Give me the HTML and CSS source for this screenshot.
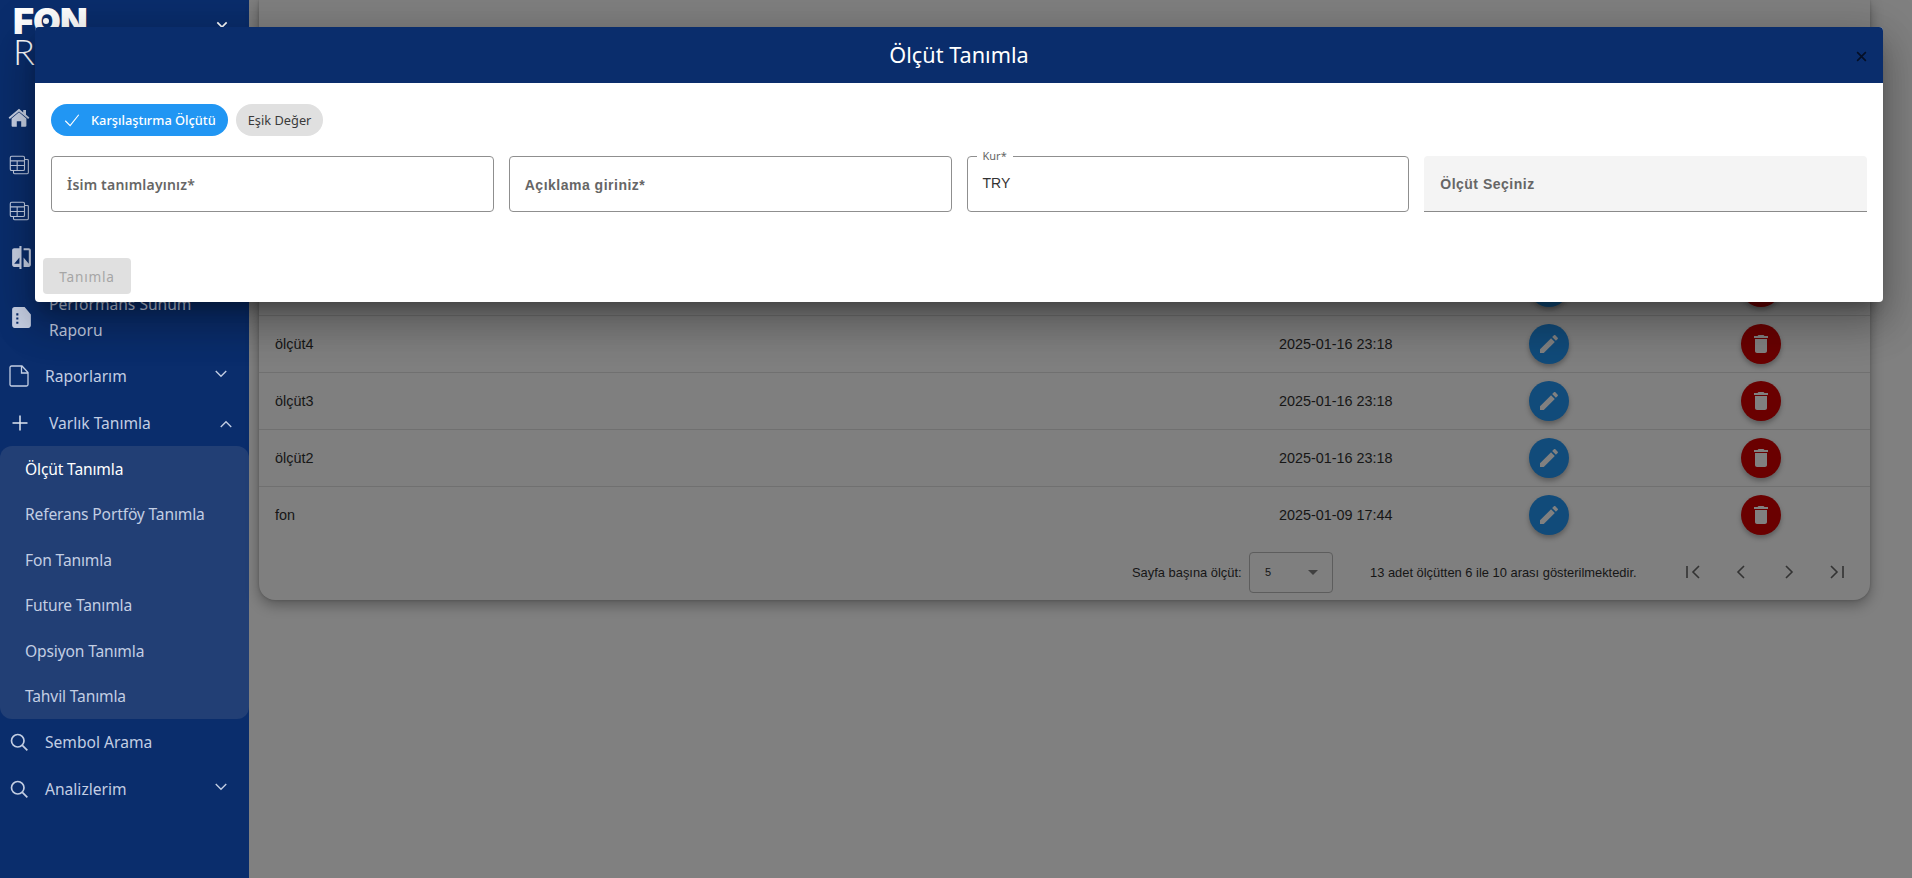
FILE: index.html
```html
<!DOCTYPE html>
<html lang="tr">
<head>
<meta charset="utf-8">
<title>Ölçüt Tanımla</title>
<link rel="stylesheet" href="styles.css">
</head>
<body>
<div class="app">
  <aside class="sidebar">
    <div class="logo">
      <div class="logo-fon">F<span class="logo-o">O</span>N</div>
      <div class="logo-r">R</div>
      <svg class="logo-chev" viewBox="0 0 24 24"><path d="M5 8l7 7 7-7"/></svg>
    </div>
    <nav class="nav">
      <div class="nav-row">
        <svg class="ic ic-fill ic-home" viewBox="0 0 24 24"><path d="M12 6.200L4.600 12.600v7.200c0 .5.4.9.9.9h4.300v-5.400h4.400v5.400h4.300c.5 0 .9-.4.9-.9v-7.200z"/><path d="M1.600 11.600L12 2.800l4.200 3.600V4h2.800v4.800l3.400 2.800-1.200 1.500L12 5.400 2.800 13.100z"/></svg>
      </div>
      <div class="nav-row">
        <svg class="ic ic-line ic-table" viewBox="0 0 24 24"><rect x="2.500" y="2.500" width="15.500" height="15.500" rx="1.500"/><path d="M2.500 7.500H18M2.500 12.500H18M10 7.500V18M6 18v2.500c0 .8.7 1 1.200 1H21c.8 0 1.200-.5 1.200-1.200V7c0-.6-.4-1-1-1H18"/></svg>
      </div>
      <div class="nav-row">
        <svg class="ic ic-line ic-table" viewBox="0 0 24 24"><rect x="2.500" y="2.500" width="15.500" height="15.500" rx="1.500"/><path d="M2.500 7.500H18M2.500 12.500H18M10 7.500V18M6 18v2.500c0 .8.7 1 1.200 1H21c.8 0 1.200-.5 1.200-1.200V7c0-.6-.4-1-1-1H18"/></svg>
      </div>
      <div class="nav-row">
        <svg class="ic ic-fill ic-big" viewBox="0 0 24 24"><path d="M10 3H5c-1.100 0-2 .9-2 2v14c0 1.100.9 2 2 2h5v2h2V1h-2v2zm0 15H5l5-6v6zm9-15h-5v2h5v13l-5-6v9h5c1.100 0 2-.9 2-2V5c0-1.100-.9-2-2-2z"/></svg>
      </div>
      <div class="nav-row nav-row-tall">
        <svg class="ic ic-fill ic-big" viewBox="0 0 24 24"><path d="M3 4.500C3 3.100 4 2 5.400 2H15l6 7v10.500c0 1.400-1 2.500-2.400 2.500H5.400C4 22 3 20.900 3 19.500zM7 8v2h2V8zm0 4v2h2v-2zm0 4v2h2v-2z"/></svg>
        <span class="nav-text nav-text-alt">Performans Sunum Raporu</span>
      </div>
      <div class="nav-row">
        <svg class="ic ic-line ic-doc" viewBox="0 0 24 24"><path d="M3 3.500C3 2.700 3.700 2 4.500 2H15l6 6.500V20.500c0 .8-.7 1.500-1.500 1.500h-15C3.700 22 3 21.300 3 20.500zM14.500 2v7H21"/></svg>
        <span class="nav-text">Raporlarım</span>
        <svg class="chev" viewBox="0 0 24 24"><path d="M5 8l7 7 7-7"/></svg>
      </div>
      <div class="nav-row nav-row-open">
        <svg class="ic ic-plus" viewBox="0 0 24 24"><path d="M12 3v18M3 12h18"/></svg>
        <span class="nav-text nav-text-plus">Varlık Tanımla</span>
        <svg class="chev chev-up" viewBox="0 0 24 24"><path d="M5 16l7-7 7 7"/></svg>
      </div>
      <div class="submenu">
        <a class="sub-item active">Ölçüt Tanımla</a>
        <a class="sub-item">Referans Portföy Tanımla</a>
        <a class="sub-item">Fon Tanımla</a>
        <a class="sub-item">Future Tanımla</a>
        <a class="sub-item">Opsiyon Tanımla</a>
        <a class="sub-item">Tahvil Tanımla</a>
      </div>
      <div class="nav-row">
        <svg class="ic ic-line ic-search" viewBox="0 0 24 24"><circle cx="10.500" cy="10.500" r="7.500"/><path d="M16 16l6 6"/></svg>
        <span class="nav-text">Sembol Arama</span>
      </div>
      <div class="nav-row nav-row-open">
        <svg class="ic ic-line ic-search" viewBox="0 0 24 24"><circle cx="10.500" cy="10.500" r="7.500"/><path d="M16 16l6 6"/></svg>
        <span class="nav-text">Analizlerim</span>
        <svg class="chev" viewBox="0 0 24 24"><path d="M5 8l7 7 7-7"/></svg>
      </div>
    </nav>
  </aside>

  <main class="main">
    <section class="card">
      <div class="row">
        <span>ölçüt5</span><span>2025-01-16 23:18</span>
        <span class="cell-btn"><button class="fab fab-edit"><svg viewBox="0 0 24 24"><path d="M3 17.250V21h3.750L17.810 9.940l-3.750-3.750L3 17.250zM20.710 7.040c.39-.39.39-1.020 0-1.410l-2.340-2.340c-.39-.39-1.020-.39-1.410 0l-1.830 1.830 3.750 3.750 1.830-1.830z"/></svg></button></span>
        <span class="cell-btn"><button class="fab fab-del"><svg viewBox="0 0 24 24"><path d="M6 19c0 1.100.9 2 2 2h8c1.100 0 2-.9 2-2V7H6v12zM19 4h-3.500l-1-1h-5l-1 1H5v2h14V4z"/></svg></button></span>
      </div>
      <div class="row">
        <span>ölçüt4</span><span>2025-01-16 23:18</span>
        <span class="cell-btn"><button class="fab fab-edit"><svg viewBox="0 0 24 24"><path d="M3 17.250V21h3.750L17.810 9.940l-3.750-3.750L3 17.250zM20.710 7.040c.39-.39.39-1.020 0-1.410l-2.340-2.340c-.39-.39-1.020-.39-1.410 0l-1.830 1.830 3.750 3.750 1.830-1.830z"/></svg></button></span>
        <span class="cell-btn"><button class="fab fab-del"><svg viewBox="0 0 24 24"><path d="M6 19c0 1.100.9 2 2 2h8c1.100 0 2-.9 2-2V7H6v12zM19 4h-3.500l-1-1h-5l-1 1H5v2h14V4z"/></svg></button></span>
      </div>
      <div class="row">
        <span>ölçüt3</span><span>2025-01-16 23:18</span>
        <span class="cell-btn"><button class="fab fab-edit"><svg viewBox="0 0 24 24"><path d="M3 17.250V21h3.750L17.810 9.940l-3.750-3.750L3 17.250zM20.710 7.040c.39-.39.39-1.020 0-1.410l-2.340-2.340c-.39-.39-1.020-.39-1.410 0l-1.830 1.830 3.750 3.750 1.830-1.830z"/></svg></button></span>
        <span class="cell-btn"><button class="fab fab-del"><svg viewBox="0 0 24 24"><path d="M6 19c0 1.100.9 2 2 2h8c1.100 0 2-.9 2-2V7H6v12zM19 4h-3.500l-1-1h-5l-1 1H5v2h14V4z"/></svg></button></span>
      </div>
      <div class="row">
        <span>ölçüt2</span><span>2025-01-16 23:18</span>
        <span class="cell-btn"><button class="fab fab-edit"><svg viewBox="0 0 24 24"><path d="M3 17.250V21h3.750L17.810 9.940l-3.750-3.750L3 17.250zM20.710 7.040c.39-.39.39-1.020 0-1.410l-2.340-2.340c-.39-.39-1.020-.39-1.410 0l-1.830 1.830 3.750 3.750 1.830-1.830z"/></svg></button></span>
        <span class="cell-btn"><button class="fab fab-del"><svg viewBox="0 0 24 24"><path d="M6 19c0 1.100.9 2 2 2h8c1.100 0 2-.9 2-2V7H6v12zM19 4h-3.500l-1-1h-5l-1 1H5v2h14V4z"/></svg></button></span>
      </div>
      <div class="row row-last">
        <span>fon</span><span>2025-01-09 17:44</span>
        <span class="cell-btn"><button class="fab fab-edit"><svg viewBox="0 0 24 24"><path d="M3 17.250V21h3.750L17.810 9.940l-3.750-3.750L3 17.250zM20.710 7.040c.39-.39.39-1.020 0-1.410l-2.340-2.340c-.39-.39-1.020-.39-1.410 0l-1.830 1.830 3.750 3.750 1.830-1.830z"/></svg></button></span>
        <span class="cell-btn"><button class="fab fab-del"><svg viewBox="0 0 24 24"><path d="M6 19c0 1.100.9 2 2 2h8c1.100 0 2-.9 2-2V7H6v12zM19 4h-3.500l-1-1h-5l-1 1H5v2h14V4z"/></svg></button></span>
      </div>
      <div class="pager">
        <span class="pager-label">Sayfa başına ölçüt:</span>
        <div class="pager-select"><span>5</span><i class="caret"></i></div>
        <span class="pager-info">13 adet ölçütten 6 ile 10 arası gösterilmektedir.</span>
        <div class="pager-nav">
          <svg viewBox="0 0 24 24"><path d="M6 6v12M18 6l-6 6 6 6"/></svg>
          <svg viewBox="0 0 24 24"><path d="M15 6l-6 6 6 6"/></svg>
          <svg viewBox="0 0 24 24"><path d="M9 6l6 6-6 6"/></svg>
          <svg viewBox="0 0 24 24"><path d="M18 6v12M6 6l6 6-6 6"/></svg>
        </div>
      </div>
    </section>
  </main>

  <div class="modal">
    <header class="modal-head">
      <h2 class="modal-title">Ölçüt Tanımla</h2>
      <svg class="modal-close" viewBox="0 0 24 24"><path d="M4 4l16 16M20 4L4 20"/></svg>
    </header>
    <div class="modal-body">
      <div class="chips">
        <span class="chip chip-on"><svg viewBox="0 0 24 24"><path d="M3 13l6.500 6.500L21 5"/></svg>Karşılaştırma Ölçütü</span>
        <span class="chip">Eşik Değer</span>
      </div>
      <div class="fields">
        <div class="field"><span class="field-label">İsim tanımlayınız*</span></div>
        <div class="field"><span class="field-label field-label-arial">Açıklama giriniz*</span></div>
        <div class="field"><span class="field-float">Kur*</span><span class="field-value">TRY</span></div>
        <div class="field field-filled"><span class="field-label field-label-arial">Ölçüt Seçiniz</span></div>
      </div>
    </div>
    <div class="modal-actions"><button class="btn-submit" disabled>Tanımla</button></div>
  </div>
</div>
</body>
</html>
```

FILE: styles.css
```css
* { box-sizing: border-box; }
html, body { margin: 0; height: 878px; overflow: hidden; }
body { font-family: "Noto Sans", "Liberation Sans", sans-serif; background: #808080; }

.app { position: relative; display: flex; height: 878px; }

/* Sidebar */
.sidebar { width: 249px; flex: none; height: 878px; background: #0a2d6c; color: #c3cee3; }
.logo { position: relative; height: 95px; padding: 5px 0 0 13px; color: #fff; }
.logo-fon { font-family: "Inter", "Liberation Sans", sans-serif; font-weight: 900; font-size: 36px; line-height: 32px; letter-spacing: -1px; margin-bottom: 0; }
.logo-o { position: relative; }
.logo-o::after { content: ""; position: absolute; left: 50%; top: 50%; width: 6px; height: 6px; margin: -3px 0 0 -3px; border-radius: 50%; background: #fff; }
.logo-r { font-family: "Lato", sans-serif; font-weight: 300; font-size: 36px; line-height: 28px; }
.logo-chev { position: absolute; left: 214px; top: 17px; width: 16px; height: 16px; fill: none; stroke: #fff; stroke-width: 2.500; }

.nav { display: flex; flex-direction: column; }
.nav-row { display: flex; align-items: center; height: 46px; padding-left: 9px; position: relative; }
.nav-row-tall { height: 74px; }
.nav-row-open { margin-top: 1px; }
.nav-text { font-size: 15.600px; line-height: 26px; margin-left: 16px; }
.nav-text-alt { margin-left: 15px; width: 180px; margin-top: 2px; }
.nav-text-plus { margin-left: 19px; }
.ic { width: 20px; height: 20px; flex: none; }
.ic-fill { fill: #c9d2e6; }
.ic-home { width: 24px; height: 24px; margin-left: -2px; margin-right: -2px; }
.ic-big { width: 25px; height: 25px; margin-top: 2px; }
.ic-line { fill: none; stroke: #c3cee3; stroke-width: 1.400; }
.ic-table { width: 22px; height: 22px; margin-left: -1px; margin-top: 1px; stroke-width: 1.200; }
.ic-doc { width: 24px; height: 24px; margin-left: -2px; margin-right: -2px; stroke-width: 1.300; }
.ic-plus { fill: none; stroke: #dfe5f0; stroke-width: 1.800; margin-left: 1px; }
.ic-search { stroke-width: 2; }
.chev { position: absolute; left: 212px; top: 12px; width: 18px; height: 18px; fill: none; stroke: #c3cee3; stroke-width: 1.800; }
.chev-up { left: 217px; top: 15px; }

.submenu { background: #223f75; border-radius: 12px; display: flex; flex-direction: column; height: 273px; }
.sub-item { display: flex; align-items: center; height: 45.500px; padding-left: 25px; font-size: 15.600px; letter-spacing: -.15px; color: #c3cee3; }
.sub-item.active { color: #fff; }

/* Main table card (dimmed by the open dialog) */
.main { flex: 1; min-width: 0; padding-left: 10px; padding-right: 42px; }
.card { height: 600px; display: flex; flex-direction: column; justify-content: flex-end; background: #7f7f7f; border-radius: 0 0 16px 16px; box-shadow: 0 5px 14px rgba(0,0,0,.32), 0 0 3px rgba(0,0,0,.2); font-family: "Liberation Sans", sans-serif; color: #161616; }
.row { display: grid; grid-template-columns: 1004px 161px 218px 206px; align-items: center; height: 57px; flex: none; padding-left: 16px; font-size: 14.400px; border-bottom: 1px solid #707070; }
.row-last { border-bottom-color: transparent; }
.cell-btn { display: flex; justify-content: center; }
.fab { width: 40px; height: 40px; padding: 8px; border: 0; border-radius: 50%; display: block; box-shadow: 0 3px 5px rgba(0,0,0,.28); }
.fab svg { display: block; width: 24px; height: 24px; fill: #808080; }
.fab-edit { background: #114b7a; }
.fab-del { background: #6a0000; }

.pager { display: flex; align-items: center; height: 56px; flex: none; padding-left: 873px; font-size: 12.900px; }
.pager-label { width: 117px; white-space: nowrap; }
.pager-select { width: 84px; height: 41px; border: 1px solid #5d5d5d; border-radius: 4px; display: flex; align-items: center; justify-content: space-between; padding: 0 14px 0 15px; font-size: 11px; }
.caret { width: 0; height: 0; border-left: 5px solid transparent; border-right: 5px solid transparent; border-top: 5px solid #404040; }
.pager-info { margin-left: 37px; width: 311px; white-space: nowrap; }
.pager-nav { display: flex; gap: 24px; }
.pager-nav svg { width: 24px; height: 24px; fill: none; stroke: #333; stroke-width: 1.600; }

/* Dialog */
.modal { position: absolute; left: 35px; top: 27px; width: 1848px; height: 275px; background: #fff; border-radius: 4px; overflow: hidden; display: flex; flex-direction: column; box-shadow: 0 11px 15px -7px rgba(0,0,0,.3), 0 24px 38px 3px rgba(0,0,0,.18), 0 9px 46px 8px rgba(0,0,0,.16); }
.modal-head { position: relative; height: 56px; background: #0a2d6c; display: flex; align-items: center; justify-content: center; flex: none; }
.modal-title { margin: 0; color: #fff; font-weight: 400; font-size: 21.700px; line-height: 56px; }
.modal-close { position: absolute; right: 15px; top: 23px; width: 13px; height: 13px; fill: none; stroke: #050f26; stroke-width: 3; }
.modal-body { padding: 21px 16px 0; flex: 1; }
.chips { display: flex; gap: 8px; }
.chip { display: flex; align-items: center; height: 32px; padding: 0 12px; border-radius: 16px; background: #e0e0e0; font-size: 12.800px; color: #3b3b3b; }
.chip-on { background: #2196f3; color: #fff; font-weight: 500; }
.chip-on svg { width: 18px; height: 18px; margin: 0 10px 0 0; fill: none; stroke: #fff; stroke-width: 1.500; }
.fields { display: grid; grid-template-columns: repeat(4, 1fr); gap: 15px; margin-top: 20px; }
.field { position: relative; height: 56px; border: 1px solid #8f8f8f; border-radius: 4px; display: flex; align-items: center; padding: 0 15px; }
.field-filled { border: 0; border-bottom: 1px solid #8a8a8a; border-radius: 4px 4px 0 0; background: #f4f4f4; padding: 0 16px; }
.field-label { font-size: 14px; font-weight: 600; color: #666; letter-spacing: .2px; margin-top: 1px; }
.field-label-arial { font-family: "Liberation Sans", sans-serif; font-weight: 700; letter-spacing: .5px; }
.field-float { position: absolute; left: 9px; top: -7px; padding: 0 6px; background: #fff; font-size: 11px; line-height: 12px; color: #666; }
.field-value { font-family: "Liberation Sans", sans-serif; font-size: 14px; color: #333; margin-top: -3px; }
.modal-actions { padding: 0 8px 8px; flex: none; }
.btn-submit { display: block; width: 88px; height: 36px; border: 0; border-radius: 4px; background: #e0e0e0; color: #a6a6a6; font-family: "Noto Sans", sans-serif; font-size: 13.600px; letter-spacing: .8px; }
```
